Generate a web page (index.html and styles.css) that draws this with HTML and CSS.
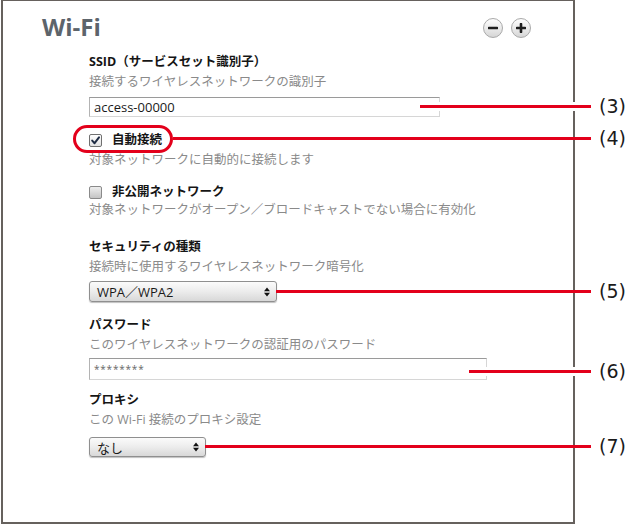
FILE: index.html
```html
<!DOCTYPE html>
<html lang="ja">
<head>
<meta charset="utf-8">
<title>Wi-Fi</title>
<link rel="stylesheet" href="styles.css">
</head>
<body>
<div class="panel">
  <div class="header">
    <h1 class="title">Wi-Fi</h1>
    <div class="zoom-btns">
      <span class="round-btn"><svg width="10" height="10" viewBox="0 0 10 10"><path d="M1 5H9" stroke="#1e1e1e" stroke-width="2.6" stroke-linecap="round"/></svg></span>
      <span class="round-btn"><svg width="10" height="10" viewBox="0 0 10 10"><path d="M1 5H9M5 1V9" stroke="#1e1e1e" stroke-width="2.6" stroke-linecap="round"/></svg></span>
    </div>
  </div>
  <div class="fields">
    <div class="field">
      <div class="label">SSID（サービスセット識別子）</div>
      <div class="desc">接続するワイヤレスネットワークの識別子</div>
      <div class="textbox tb-ssid">access-00000</div>
    </div>
    <div class="field f-auto">
      <div class="check-row"><span class="checkbox checked"><svg width="11" height="11" viewBox="0 0 11 11"><path d="M2.2 5.6L4.6 8.2L9 2.4" fill="none" stroke="#1f2c44" stroke-width="2" stroke-linecap="round" stroke-linejoin="round"/></svg></span><span class="label">自動接続</span></div>
      <div class="desc">対象ネットワークに自動的に接続します</div>
    </div>
    <div class="field f-hidden">
      <div class="check-row"><span class="checkbox"></span><span class="label">非公開ネットワーク</span></div>
      <div class="desc desc-tight">対象ネットワークがオープン／ブロードキャストでない場合に有効化</div>
    </div>
    <div class="field f-sec">
      <div class="label">セキュリティの種類</div>
      <div class="desc">接続時に使用するワイヤレスネットワーク暗号化</div>
      <div class="dropdown dd-sec"><span>WPA／WPA2</span><svg class="arrows" width="6" height="10" viewBox="0 0 6 10"><path d="M0 4.2L3 0.6L6 4.2Z M0 5.8L3 9.4L6 5.8Z" fill="#111"/></svg></div>
    </div>
    <div class="field f-pw">
      <div class="label">パスワード</div>
      <div class="desc">このワイヤレスネットワークの認証用のパスワード</div>
      <div class="textbox tb-pw">********</div>
    </div>
    <div class="field f-proxy">
      <div class="label">プロキシ</div>
      <div class="desc">この Wi-Fi 接続のプロキシ設定</div>
      <div class="dropdown dd-proxy"><span>なし</span><svg class="arrows" width="6" height="10" viewBox="0 0 6 10"><path d="M0 4.2L3 0.6L6 4.2Z M0 5.8L3 9.4L6 5.8Z" fill="#111"/></svg></div>
    </div>
  </div>
</div>

<div class="callout-ring"></div>
<div class="callout-line cl-3"></div>
<div class="callout-line cl-4"></div>
<div class="callout-line cl-5"></div>
<div class="callout-line cl-6"></div>
<div class="callout-line cl-7"></div>
<span class="callout-num cn-3">(3)</span>
<span class="callout-num cn-4">(4)</span>
<span class="callout-num cn-5">(5)</span>
<span class="callout-num cn-6">(6)</span>
<span class="callout-num cn-7">(7)</span>
</body>
</html>
```
FILE: styles.css
```css
* { box-sizing: border-box; }
html, body { margin: 0; background: #fff; }
body {
  width: 631px;
  height: 525px;
  position: relative;
  overflow: hidden;
  font-family: "Open Sans", "Noto Sans CJK JP", sans-serif;
  font-size: 12.5px;
  color: #1a1a1a;
}
.panel {
  margin-left: 1px;
  width: 574px;
  height: 524px;
  border: 2px solid #66615d;
  border-top-width: 1px;
}
.header {
  display: flex;
  align-items: flex-start;
  padding: 11px 42px 0 39px;
}
.title {
  margin: 0;
  font-size: 24px;
  line-height: 30px;
  font-weight: 700;
  color: #5d646b;
}
.zoom-btns {
  margin-left: auto;
  margin-top: 6px;
  display: flex;
  gap: 8px;
}
.round-btn {
  width: 20px;
  height: 20px;
  border-radius: 50%;
  border: 1px solid #a9a9a9;
  background: linear-gradient(#fdfdfd, #e9e9e9 55%, #d6d6d6);
  display: flex;
  align-items: center;
  justify-content: center;
}
.fields {
  padding-left: 86px;
  margin-top: 12px;
}
.label {
  font-weight: 700;
  line-height: 16px;
  color: #151515;
}
.desc {
  margin-top: 4px;
  line-height: 16px;
  color: #8a8a8a;
}
.desc-tight { margin-top: 2px; }
.f-auto { margin-top: 15px; }
.f-hidden { margin-top: 16px; }
.f-sec { margin-top: 21px; }
.f-pw { margin-top: 15px; }
.f-proxy { margin-top: 12px; }

.check-row {
  display: flex;
  align-items: center;
  gap: 10px;
  height: 16px;
}
.checkbox {
  width: 13px;
  height: 13px;
  border: 1px solid #8a8a8a;
  border-radius: 2px;
  background: linear-gradient(#eeeeee, #c4c4c4);
  display: flex;
  align-items: center;
  justify-content: center;
}
.checkbox.checked {
  border-color: #707070;
  background: linear-gradient(#ffffff, #e2e2e2);
}
.textbox {
  border: 1px solid;
  border-color: #9a9a9a #d6d6d6 #d6d6d6 #b3b3b3;
  background: #fff;
  padding-left: 4px;
  font-size: 13px;
  color: #1a1a1a;
}
.tb-ssid {
  margin-top: 7px;
  width: 351px;
  height: 20px;
  line-height: 18px;
}
.tb-pw {
  margin-top: 5px;
  width: 398px;
  height: 22px;
  line-height: 20px;
  font-size: 10px;
  letter-spacing: 0.8px;
  color: #666;
}
.dropdown {
  display: flex;
  align-items: center;
  justify-content: space-between;
  border: 1px solid #8f8f8f;
  border-radius: 3px;
  background: linear-gradient(#fbfbfb, #ececec 50%, #d8d8d8);
  box-shadow: 0 1px 1px rgba(0, 0, 0, 0.25);
  padding: 0 6px 0 7px;
  font-size: 13px;
  color: #1a1a1a;
}
.dd-sec {
  margin-top: 6px;
  width: 188px;
  height: 21px;
}
.dd-proxy {
  margin-top: 9px;
  width: 117px;
  height: 20px;
}
.arrows { display: block; }

/* annotation overlays */
.callout-ring {
  position: absolute;
  left: 73px;
  top: 125px;
  width: 100px;
  height: 28px;
  border: 3px solid #e3001b;
  border-radius: 14px;
}
.callout-line {
  position: absolute;
  height: 3px;
  background: #e3001b;
  box-shadow: 0 -3px 0 #fff, 0 3px 0 #fff;
}
.cl-3 { top: 105px; left: 420px; width: 171px; }
.cl-4 { top: 137px; left: 173px; width: 418px; box-shadow: none; }
.cl-5 { top: 290px; left: 276px; width: 315px; box-shadow: none; }
.cl-6 { top: 370px; left: 469px; width: 122px; }
.cl-7 { top: 445px; left: 205px; width: 386px; box-shadow: none; }
.callout-num {
  position: absolute;
  left: 599px;
  font-family: "DejaVu Sans", sans-serif;
  font-size: 19px;
  line-height: 24px;
  color: #1a1a1a;
}
.cn-3 { top: 94px; }
.cn-4 { top: 126px; }
.cn-5 { top: 279px; }
.cn-6 { top: 359px; }
.cn-7 { top: 434px; }
```
